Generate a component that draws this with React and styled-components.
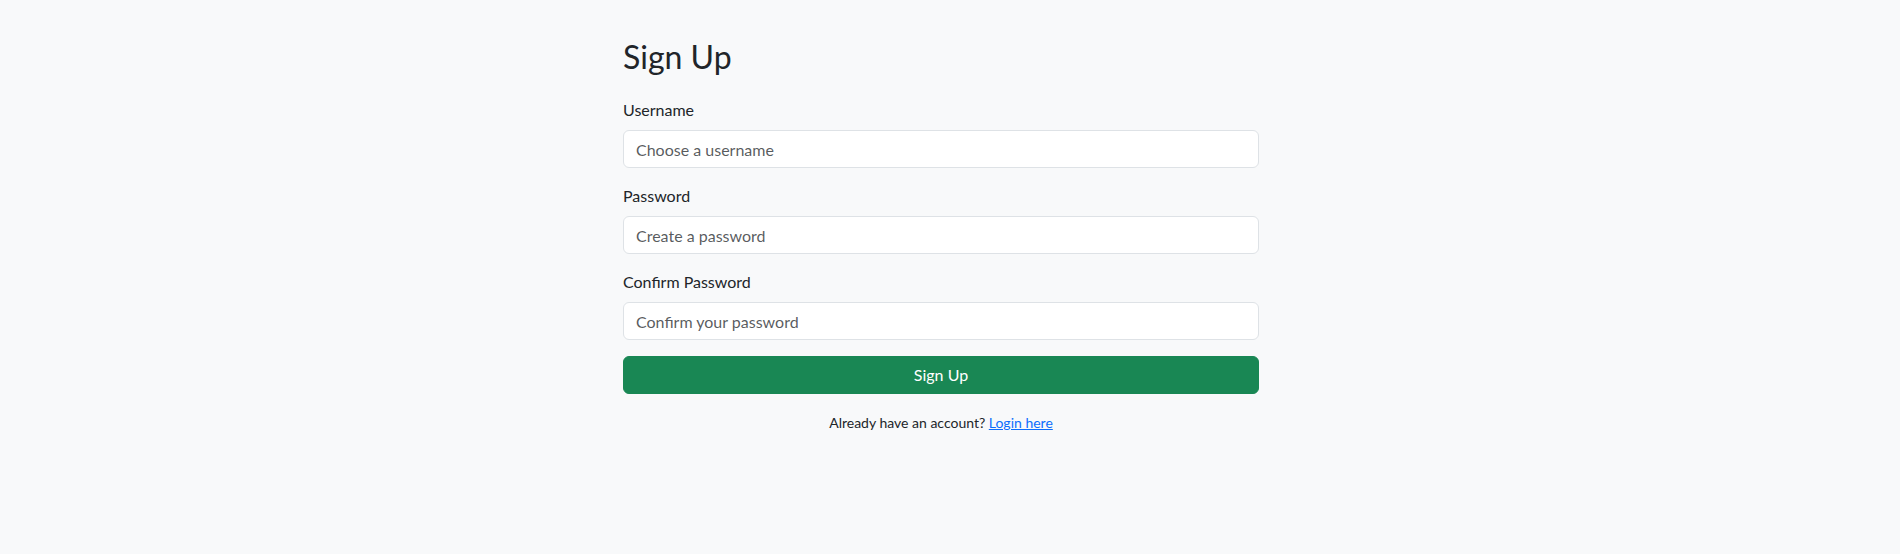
import styled, { createGlobalStyle } from 'styled-components';

const GlobalStyle = createGlobalStyle`
  html, body {
    margin: 0;
    background: #f8f9fa;
    color: #212529;
    font-family: Lato, "Noto Sans", sans-serif;
    font-size: 16px;
    line-height: 1.5;
  }
  * {
    box-sizing: border-box;
  }
`;

const Page = styled.div`
  min-height: 554px;
  display: flex;
  justify-content: center;
  padding: 38px 18px 0 0;
`;

const FormColumn = styled.div`
  width: 636px;
`;

const Title = styled.h2`
  margin: 0 0 22px;
  font-size: 32px;
  font-weight: 400;
  line-height: 1.2;
`;

const Field = styled.div`
  margin-bottom: 16px;
`;

const Label = styled.label`
  display: block;
  margin-bottom: 8px;
`;

const Input = styled.input`
  display: block;
  width: 100%;
  height: 38px;
  padding: 6px 12px;
  font: inherit;
  line-height: 24px;
  color: #212529;
  background: #fff;
  border: 1px solid #dee2e6;
  border-radius: 6px;
  outline: none;

  &::placeholder {
    color: rgba(33, 37, 41, 0.75);
  }
`;

const SubmitButton = styled.button`
  display: block;
  width: 100%;
  height: 38px;
  padding: 6px 12px;
  font: inherit;
  line-height: 24px;
  color: #fff;
  background: #198754;
  border: 1px solid #198754;
  border-radius: 6px;
  cursor: pointer;
`;

const Footer = styled.p`
  margin: 16px 0 0;
  text-align: center;
`;

const Small = styled.small`
  font-size: 14px;
`;

const Link = styled.a`
  color: #0d6efd;
  text-decoration: underline;
`;

const fields = [
  { id: 'username', label: 'Username', type: 'text', placeholder: 'Choose a username' },
  { id: 'password', label: 'Password', type: 'password', placeholder: 'Create a password' },
  { id: 'confirm', label: 'Confirm Password', type: 'password', placeholder: 'Confirm your password' },
];

const App = () => {
  const handleSubmit = (e) => {
    e.preventDefault();
  };

  return (
    <>
      <GlobalStyle />
      <Page>
        <FormColumn>
          <Title>Sign Up</Title>
          <form onSubmit={handleSubmit}>
            {fields.map((f) => (
              <Field key={f.id}>
                <Label htmlFor={f.id}>{f.label}</Label>
                <Input id={f.id} name={f.id} type={f.type} placeholder={f.placeholder} />
              </Field>
            ))}
            <SubmitButton type="submit">Sign Up</SubmitButton>
          </form>
          <Footer>
            <Small>
              Already have an account? <Link href="#login">Login here</Link>
            </Small>
          </Footer>
        </FormColumn>
      </Page>
    </>
  );
};

export default App;
